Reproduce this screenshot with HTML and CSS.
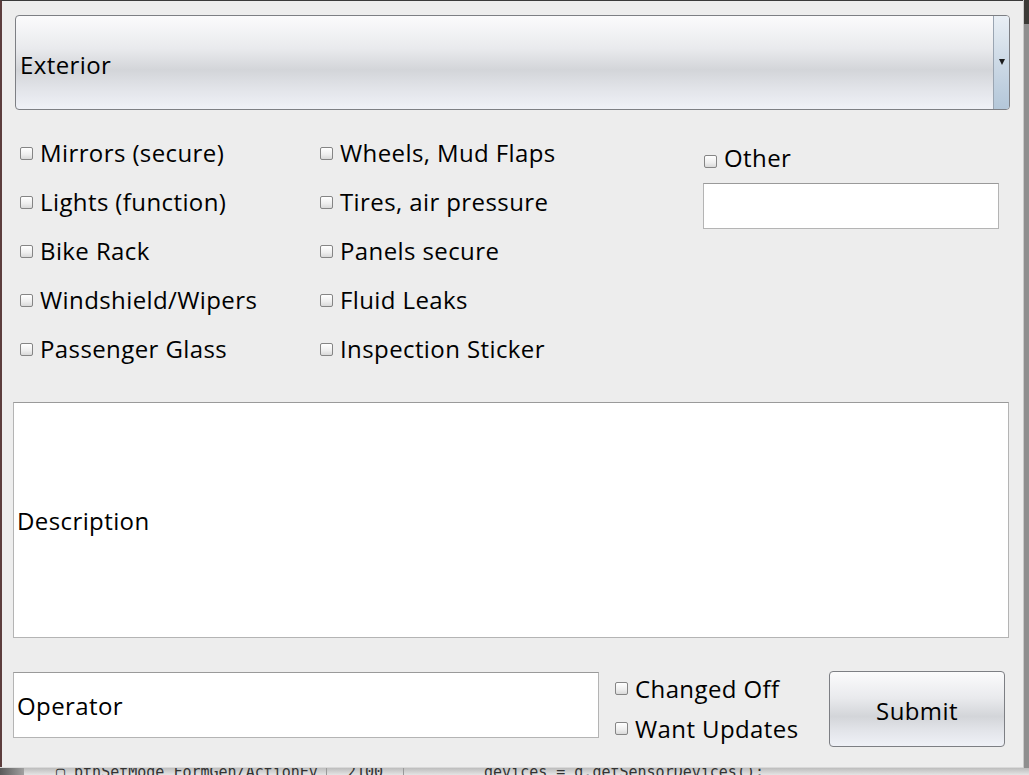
FILE: index.html
```html
<!DOCTYPE html>
<html>
    <head>
        <meta charset="utf-8">
        <title>Inspection</title>
        <link rel="stylesheet" href="styles.css">
    </head>
    <body>
        <div class="desk">
            <div class="window">
                <div class="combo">
                    <span class="combo-text">Exterior</span>
                    <span class="combo-drop"><span class="arrow"></span></span>
                </div>

                <div class="checks">
                    <div class="col">
                        <label class="check"><span class="box"></span>Mirrors (secure)</label>
                        <label class="check"><span class="box"></span>Lights (function)</label>
                        <label class="check"><span class="box"></span>Bike Rack</label>
                        <label class="check"><span class="box"></span>Windshield/Wipers</label>
                        <label class="check"><span class="box"></span>Passenger Glass</label>
                    </div>
                    <div class="col">
                        <label class="check"><span class="box"></span>Wheels, Mud Flaps</label>
                        <label class="check"><span class="box"></span>Tires, air pressure</label>
                        <label class="check"><span class="box"></span>Panels secure</label>
                        <label class="check"><span class="box"></span>Fluid Leaks</label>
                        <label class="check"><span class="box"></span>Inspection Sticker</label>
                    </div>
                    <div class="col other-col">
                        <label class="check other"><span class="box"></span>Other</label>
                        <div class="field other-field"></div>
                    </div>
                </div>

                <div class="field description">Description</div>

                <div class="bottom">
                    <div class="field operator">Operator</div>
                    <div class="flags">
                        <label class="check"><span class="box"></span>Changed Off</label>
                        <label class="check"><span class="box"></span>Want Updates</label>
                    </div>
                    <span class="button">Submit</span>
                </div>
            </div>
            <div class="side"></div>
        </div>
        <div class="under">
            <span class="under-shade"></span>
            <span class="under-cell">&#9634; btnSetMode_FormGen/ActionEv</span>
            <span class="under-cell num">2100</span>
            <span class="under-code">devices = g.getSensorDevices();</span>
        </div>
    </body>
</html>
```

FILE: styles.css
```css
body {
    margin: 0;
    background-color: #d9d9d9;
    font-family: "Open Sans", "Noto Sans", sans-serif;
    color: #000;
    overflow: hidden;
}
.desk {
    display: flex;
    height: 768px;
}
.window {
    width: 1023px;
    height: 767px;
    box-sizing: border-box;
    background-color: #ededed;
    border-left: 2px solid #5c3d3d;
    border-top: 1px solid #3a3a3a;
    padding: 14px 13px 0 11px;
    display: flex;
    flex-direction: column;
}
.side {
    flex: 1;
    background: linear-gradient(to bottom, #3c3b37 0, #3c3b37 24px, #8f8f8f 24px, #8f8f8f 100%);
    border-left: 1px solid #c9c9c9;
}

/* combo box */
.combo {
    margin-left: 2px;
    height: 95px;
    box-sizing: border-box;
    border: 1px solid #7d7f84;
    border-radius: 4px;
    background: linear-gradient(to bottom, #fbfbfc 0%, #e9eaed 35%, #d3d5d9 58%, #e3e5ea 80%, #eff1f7 100%);
    display: flex;
    align-items: center;
    overflow: hidden;
}
.combo-text {
    flex: 1;
    padding-left: 4px;
    padding-top: 3px;
    font-size: 24px;
    letter-spacing: 0.4px;
}
.combo-drop {
    width: 15px;
    align-self: stretch;
    border-left: 1px solid #9aa5b2;
    background: linear-gradient(to bottom, #e9eff5 0%, #cfdbe7 45%, #b4c7d9 100%);
    display: flex;
    align-items: center;
    justify-content: center;
}
.arrow {
    width: 0;
    height: 0;
    border-left: 3px solid transparent;
    border-right: 3px solid transparent;
    border-top: 6px solid #1c1c1c;
    margin-bottom: 2px;
}

/* checkboxes */
.checks {
    display: grid;
    grid-template-columns: 300px 384px 1fr;
    margin-top: 18px;
    padding-left: 7px;
}
.col {
    display: flex;
    flex-direction: column;
}
.check {
    display: flex;
    align-items: center;
    height: 49px;
    font-size: 24px;
    letter-spacing: 0.4px;
    white-space: nowrap;
}
.box {
    width: 11px;
    height: 11px;
    border: 1px solid #858585;
    border-radius: 2px;
    background: linear-gradient(to bottom, #ffffff 0%, #eeeeee 60%, #d9d9d9 100%);
    margin-right: 7px;
    flex: none;
}
.check .box {
    margin-top: 1px;
}
.other {
    height: 37px;
    margin-top: 9px;
    align-items: flex-end;
}
.other .box {
    margin-bottom: 6px;
}
.other-field {
    margin-top: 9px;
    margin-left: -1px;
    width: 296px;
    height: 46px;
}

/* text fields */
.field {
    box-sizing: border-box;
    background-color: #fff;
    border: 1px solid #b4b4b4;
    border-top-color: #9a9a9a;
    font-size: 24px;
    letter-spacing: 0.4px;
    display: flex;
    align-items: center;
    padding-left: 3px;
}
.description {
    margin-top: 29px;
    width: 996px;
    height: 236px;
}
.bottom {
    display: flex;
    align-items: flex-start;
    margin-top: 33px;
}
.operator {
    margin-top: 1px;
    width: 586px;
    height: 66px;
}
.flags {
    margin-left: 16px;
    margin-top: -3px;
    display: flex;
    flex-direction: column;
}
.flags .check {
    height: 40px;
}
.button {
    margin-left: auto;
    margin-right: 5px;
    width: 176px;
    height: 76px;
    box-sizing: border-box;
    border: 1px solid #7d7f84;
    border-radius: 4px;
    background: linear-gradient(to bottom, #fbfbfc 0%, #e9eaed 35%, #d3d5d9 60%, #e3e5ea 80%, #eff1f7 100%);
    font-size: 24px;
    letter-spacing: 0.4px;
    display: flex;
    align-items: center;
    justify-content: center;
    padding-top: 2px;
}

/* what shows behind the window */
.under {
    height: 7px;
    display: flex;
    align-items: flex-start;
    overflow: hidden;
    background: linear-gradient(to bottom, #bdbdbd, #e4e4e4);
    font-family: "DejaVu Sans Mono", monospace;
    font-size: 15px;
    line-height: 15px;
    color: #333;
}
.under-shade {
    width: 24px;
    height: 7px;
    background: linear-gradient(to right, #5a5a5a, #a0a0a0);
}
.under-cell {
    padding: 0 8px 0 32px;
    margin-top: -3px;
    border-right: 1px solid #999;
}
.under-cell.num {
    padding: 0 20px;
}
.under-code {
    margin-top: -3px;
    padding-left: 80px;
}
```
